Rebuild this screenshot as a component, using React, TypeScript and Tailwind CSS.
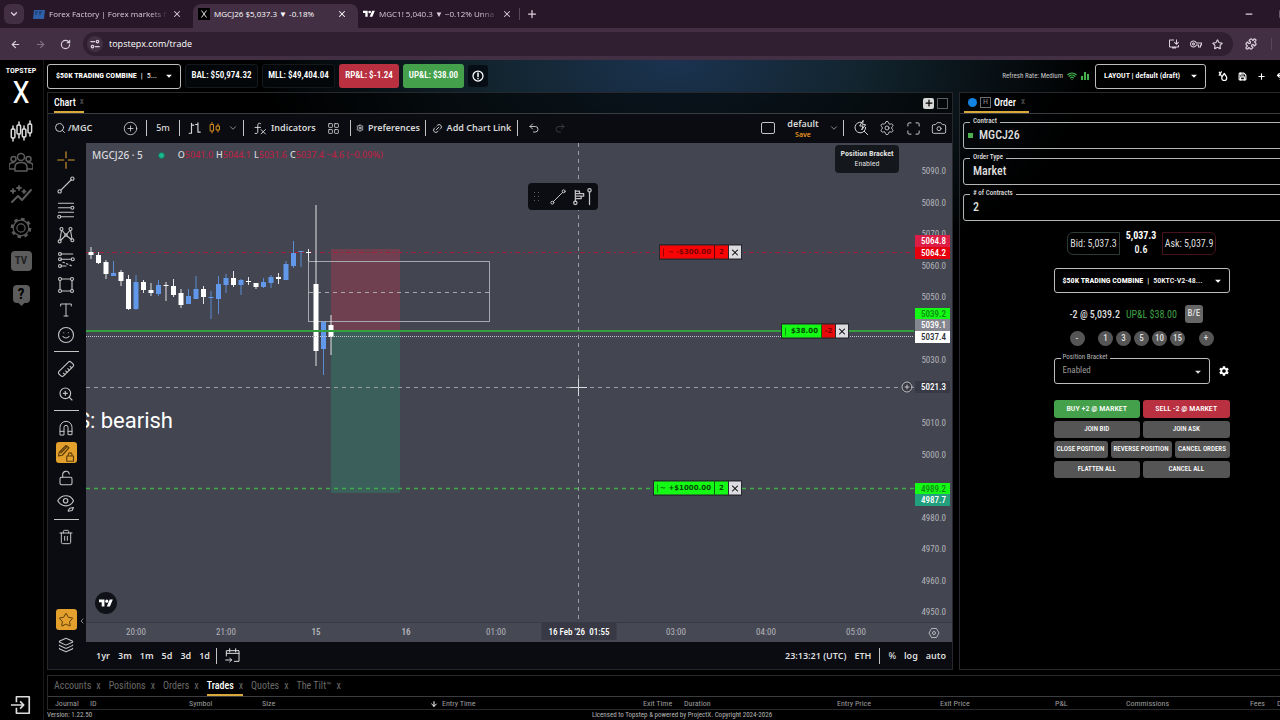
import React from 'react';
import {
  ArrowDown,
  ArrowLeft,
  ArrowRight,
  Camera,
  ChevronDown,
  ChevronLeft,
  CirclePlus,
  Layers,
  LayoutGrid,
  Link2,
  LockOpen,
  Maximize,
  Minus,
  Plus,
  Puzzle,
  Redo2,
  RotateCw,
  Ruler,
  Save,
  Search,
  Settings,
  Smile,
  Square,
  Star,
  Trash2,
  Undo2,
  Wifi,
  X,
  ZoomIn,
} from 'lucide-react';
import { MdSettings, MdOutlineVpnKey, MdOutlineInstallDesktop, MdArrowDropDown } from 'react-icons/md';

interface IconProps {
  className?: string;
  children: React.ReactNode;
}

const Glyph: React.FC<IconProps> = ({ className = 'size-[18px]', children }) => (
  <svg
    viewBox="0 0 24 24"
    fill="none"
    stroke="currentColor"
    strokeWidth="1.5"
    strokeLinecap="round"
    strokeLinejoin="round"
    aria-hidden="true"
    className={className}
  >
    {children}
  </svg>
);

const TradingViewMark: React.FC<{ className?: string }> = ({ className }) => (
  <svg viewBox="0 0 36 28" fill="currentColor" aria-hidden="true" className={className}>
    <path d="M14 22H7V11H0V4h14v18zM28 22h-8l7.5-18h8L28 22z" />
    <circle cx="20" cy="8" r="4" />
  </svg>
);

/* ---------- Browser chrome ---------- */

const browserTabs = [
  { title: 'Forex Factory | Forex markets f', icon: 'ff', active: false },
  { title: 'MGCJ26 $5,037.3 ▼ -0.18%', icon: 'x', active: true },
  { title: 'MGC1! 5,040.3 ▼ −0.12% Unna', icon: 'tv', active: false },
];

const BrowserChrome = () => (
  <header className="shrink-0 bg-[#281629] font-['Open_Sans',sans-serif] text-[#dccfdc]">
    <div className="flex h-7 items-center pl-1">
      <button aria-label="Search tabs" className="flex size-5 items-center justify-center rounded-md bg-[#432f44]">
        <ChevronDown className="size-2.5" strokeWidth={3} />
      </button>
      <div className="flex h-full items-end pl-1">
        {browserTabs.map((tab) => (
          <div
            key={tab.title}
            className={`flex h-6 w-[165px] items-center gap-1 rounded-t-lg pr-[11px] pb-1 pl-[5px] ${tab.active ? 'bg-[#432f44] text-white' : ''}`}
          >
            {tab.icon === 'ff' && (
              <svg viewBox="0 0 12 10" className="h-2.5 w-3 shrink-0" aria-hidden="true">
                <path d="M1 1h11l-1 9H0z" fill="#2f5fa8" />
                <path d="M2 3h3M2 5h2M6 3h3M6 5h2" stroke="#17335f" strokeWidth="1" />
              </svg>
            )}
            {tab.icon === 'x' && (
              <svg viewBox="0 0 12 12" className="size-3 shrink-0" aria-hidden="true">
                <path d="M0 0h12v12H0z" fill="#000" />
                <path d="M3.500 2.500l5 7M8.500 2.500l-5 7" stroke="#ddd" strokeWidth="1" />
              </svg>
            )}
            {tab.icon === 'tv' && <TradingViewMark className="h-2.5 w-3 shrink-0 text-white" />}
            <span className={`min-w-0 flex-1 text-[8px] font-medium whitespace-nowrap ${tab.active ? '' : '[mask-image:linear-gradient(90deg,#000_85%,transparent)]'}`}>
              {tab.title}
            </span>
            <button aria-label="Close tab">
              <X className="size-2.5" strokeWidth={2.5} />
            </button>
          </div>
        ))}
      </div>
      <div className="-ml-1 h-3 w-px bg-[#5a465b]" />
      <button aria-label="New tab" className="ml-1.5">
        <Plus className="size-3" strokeWidth={2.5} />
      </button>
      <div className="flex-1" />
      <button aria-label="Minimize" className="mr-[25px]">
        <Minus className="size-2.5" strokeWidth={3} />
      </button>
      <button aria-label="Restore" className="mr-9">
        <Square className="size-2.5" strokeWidth={3} />
      </button>
    </div>
    <div className="flex h-8 items-center bg-[#432f44] pl-2">
      <button aria-label="Back" className="flex w-[25px] justify-start pl-0.5">
        <ArrowLeft className="size-[11px]" strokeWidth={2.5} />
      </button>
      <button aria-label="Forward" className="flex w-[25px] justify-start pl-0.5 text-[#836f84]">
        <ArrowRight className="size-[11px]" strokeWidth={2.5} />
      </button>
      <button aria-label="Reload" className="flex w-[25px] justify-start pl-0.5">
        <RotateCw className="size-[11px]" strokeWidth={2.5} />
      </button>
      <div className="flex h-6 flex-1 items-center rounded-full bg-[#2f1f30] pl-1">
        <span className="flex size-4 items-center justify-center rounded-full bg-[#432f44]">
          <Glyph className="size-2.5">
            <path d="M2 6h9M13 18h9" strokeWidth="3" />
            <circle cx="18" cy="6" r="3" strokeWidth="3" />
            <circle cx="6" cy="18" r="3" strokeWidth="3" />
          </Glyph>
        </span>
        <input
          aria-label="Address"
          defaultValue="topstepx.com/trade"
          className="min-w-0 flex-1 bg-transparent pl-1.5 text-[9px] font-medium text-white outline-none"
        />
        <div className="flex items-center gap-2.5 pr-2.5">
          <MdOutlineInstallDesktop className="size-3" />
          <MdOutlineVpnKey className="size-3" />
          <Star className="size-[11px]" strokeWidth={2.5} />
        </div>
      </div>
      <button aria-label="Extensions" className="ml-3 w-[26px]">
        <Puzzle className="size-3" strokeWidth={2.5} />
      </button>
      <div className="mr-[53px] h-3 w-px bg-[#5a465b]" />
    </div>
  </header>
);

/* ---------- Sidebar ---------- */

const Sidebar = () => (
  <nav className="flex w-11 shrink-0 flex-col items-center border-r border-[#171717] bg-black pr-px pb-1 text-[#5c5c5c]">
    <div className="flex flex-col items-center pt-1.5 text-white">
      <span className="text-[8px] leading-[10px] font-semibold">TOPSTEP</span>
      <span className="text-[32px] leading-8">X</span>
    </div>
    <div className="flex flex-1 flex-col items-center pt-[7px]">
      <a href="#trade" aria-label="Trade" className="flex h-8 items-center text-[#dcdcdc]">
        <Glyph className="size-6">
          <path d="M4 7v3M4 19v3M10 3v3M10 15v4M15 7v3M15 18v3M21 2v3M21 14v3" />
          <rect x="2.3" y="10" width="3.6" height="9" rx="1" />
          <rect x="8" y="6" width="3.6" height="9" rx="1" />
          <rect x="13.3" y="10" width="3.6" height="8" rx="1" />
          <rect x="19" y="5" width="3.6" height="9" rx="1" />
        </Glyph>
      </a>
      <a href="#community" aria-label="Community" className="flex h-8 items-center">
        <Glyph className="size-6">
          <circle cx="12" cy="6" r="3.500" />
          <circle cx="4.500" cy="8" r="2.500" />
          <circle cx="19.500" cy="8" r="2.500" />
          <path d="M6 20v-4c0-3 2.500-4.500 6-4.500s6 1.500 6 4.500v4zM6 18H0v-3c0-2 2-3.500 5-3.500M18 18h6v-3c0-2-2-3.500-5-3.500" />
        </Glyph>
      </a>
      <a href="#stats" aria-label="Statistics" className="flex h-8 items-center">
        <Glyph className="size-6">
          <path d="M3 19l6-6 4 4 9-10" strokeWidth="2" />
          <path d="M4 6v4M2 8h4M10 3v4M8 5h4M15 7v3M13.500 8.500h3" strokeWidth="1.800" />
        </Glyph>
      </a>
      <a href="#settings" aria-label="Settings" className="flex h-[34px] items-center">
        <svg viewBox="0 0 24 24" fill="none" stroke="currentColor" className="size-[22px]" aria-hidden="true">
          <circle cx="12" cy="12" r="4.500" strokeWidth="1.300" />
          <circle cx="12" cy="12" r="8.500" strokeWidth="1.300" />
          <circle cx="12" cy="12" r="10" strokeWidth="2.500" strokeDasharray="3.900 3.900" />
        </svg>
      </a>
      <a href="#tv" aria-label="TradingView" className="flex h-8 items-center">
        <span className="flex h-5 w-[21px] items-center justify-center rounded bg-[#5c5c5c] text-[11px] font-bold text-[#222]">TV</span>
      </a>
      <a href="#help" aria-label="Help" className="flex h-[34px] items-center">
        <span className="relative flex h-[18px] w-[17px] items-center justify-center rounded-sm bg-[#5c5c5c] text-[15px] font-bold text-black after:absolute after:-bottom-0.5 after:left-1.5 after:size-[5px] after:rotate-45 after:bg-[#5c5c5c]">
          ?
        </span>
      </a>
    </div>
    <button aria-label="Log out" className="text-[#dcdcdc]">
      <Glyph className="size-[22px]">
        <path d="M7 9V3h14v18H7v-6M1 12h14M11 8l4 4-4 4" strokeWidth="1.800" strokeLinecap="butt" />
      </Glyph>
    </button>
  </nav>
);

/* ---------- Top bar ---------- */

const TopBar = () => (
  <div className="flex h-8 shrink-0 items-center gap-1 text-[9px] font-semibold text-white">
    <label className="relative flex h-[25px] w-[134px] items-center rounded-[3px] border border-[#bdbdbd] bg-black pl-2 text-[8px]">
      <span className="font-bold">$50K TRADING COMBINE</span>
      <span className="px-1 font-normal">|</span>
      <select aria-label="Trading account" className="min-w-0 flex-1 appearance-none bg-transparent font-normal outline-none">
        <option>5...</option>
      </select>
      <MdArrowDropDown className="pointer-events-none absolute right-1 size-3.5" />
    </label>
    <div className="flex h-6 w-[73px] items-center justify-center rounded-[3px] border border-[#15191c] bg-[#04070a]">BAL: $50,974.32</div>
    <div className="flex h-6 w-[73px] items-center justify-center rounded-[3px] border border-[#15191c] bg-[#04070a]">MLL: $49,404.04</div>
    <div className="flex h-6 w-[60px] items-center justify-center rounded-[3px] bg-[#b93040]">RP&amp;L: $-1.24</div>
    <div className="flex h-6 w-[61px] items-center justify-center rounded-[3px] bg-[#44a04b]">UP&amp;L: $38.00</div>
    <button aria-label="Account info" className="flex h-[22px] w-5 items-center justify-center rounded-[3px] bg-[#070d14]">
      <Glyph className="size-3">
        <circle cx="12" cy="12" r="10" strokeWidth="2.500" />
        <path d="M12 6v7M12 17v.5" strokeWidth="3" />
      </Glyph>
    </button>
    <div className="flex-1" />
    <span className="text-[7px] font-normal text-[#c8c8c8]">Refresh Rate: Medium</span>
    <Wifi className="size-2.5 text-[#44b04b]" strokeWidth={3} />
    <svg viewBox="0 0 8 8" fill="#44b04b" className="size-2" aria-hidden="true">
      <path d="M0 4h2v4H0zM3 0h2v8H3zM6 2h2v6H6z" />
    </svg>
    <label className="relative ml-0.5 flex h-[25px] w-[111px] items-center rounded-[3px] border border-[#bdbdbd] bg-black">
      <select aria-label="Layout" className="w-full appearance-none bg-transparent pl-2 text-[8px] outline-none">
        <option>LAYOUT | default (draft)</option>
      </select>
      <MdArrowDropDown className="pointer-events-none absolute right-1 size-3.5" />
    </label>
    <div className="mr-10 flex items-center gap-2.5 pl-2">
      <button aria-label="Theme">
        <Glyph className="size-2.5">
          <path d="M15 6c4 5 6 8 6 11a6 6 0 0 1-12 0c0-3 2-6 6-11zM3 3l5 9M8 2L3 10" strokeWidth="3" />
        </Glyph>
      </button>
      <button aria-label="Save layout"><Save className="size-[9px]" strokeWidth={3} /></button>
      <button aria-label="Add widget"><Plus className="size-[9px]" strokeWidth={3} /></button>
      <button aria-label="Reset layout"><Undo2 className="size-[9px]" strokeWidth={3} /></button>
    </div>
  </div>
);

/* ---------- Chart ---------- */

const Divider = () => <div className="h-4 w-px shrink-0 bg-[#c4c4c4]" />;

const ChartToolbar = () => (
  <div className="flex h-[29px] shrink-0 items-center bg-[#0a0c11] pb-px font-['Noto_Sans',sans-serif] text-[9px] font-semibold text-[#d6d6d6]">
    <button className="flex w-[66px] items-center gap-0.5 pl-1.5">
      <Search className="size-3" strokeWidth={1.8} />
      /MGC
    </button>
    <button aria-label="Compare symbol" className="flex w-8 justify-center">
      <CirclePlus className="size-[15px]" strokeWidth={1.3} />
    </button>
    <Divider />
    <button className="w-8 font-medium">5m</button>
    <Divider />
    <button aria-label="Bar replay" className="flex w-[29px] justify-center">
      <Glyph className="size-3.5">
        <path d="M6 4v17M2 21h4M6 7h4M17 3v16M13 6h4M17 19h4" strokeWidth="2" />
      </Glyph>
    </button>
    <button aria-label="Candle style" className="flex w-3 justify-center text-[#e8961e]">
      <Glyph className="size-3.5">
        <path d="M6 1v4M6 18v4M18 4v4M18 16v4" strokeWidth="1.800" />
        <rect x="3" y="5" width="6" height="13" strokeWidth="1.800" />
        <rect x="15" y="8" width="6" height="8" strokeWidth="1.800" />
      </Glyph>
    </button>
    <button aria-label="More chart styles" className="flex w-[22px] justify-center pl-0.5">
      <ChevronDown className="size-2.5" strokeWidth={1.5} />
    </button>
    <Divider />
    <button className="flex w-[79px] items-center gap-1 pl-2.5">
      <Glyph className="size-[13px]">
        <path d="M12 3c-3-2-5 0-5 3v12c0 3-2 4-5 3M2 10h10M13 14l8 8M21 14l-8 8" strokeWidth="1.800" />
      </Glyph>
      Indicators
    </button>
    <button aria-label="Indicator templates" className="flex w-[27px] pl-1">
      <LayoutGrid className="size-[13px]" strokeWidth={1.5} />
    </button>
    <Divider />
    <button className="flex w-[74px] items-center justify-center gap-1">
      <Settings className="size-2" strokeWidth={2.5} />
      Preferences
    </button>
    <Divider />
    <button className="flex w-[91px] items-center justify-center gap-1">
      <Link2 className="size-[11px] -rotate-45" />
      Add Chart Link
    </button>
    <Divider />
    <button aria-label="Undo" className="flex w-8 justify-center">
      <Undo2 className="size-3" strokeWidth={1.8} />
    </button>
    <button aria-label="Redo" className="flex w-5 justify-center text-[#3c3e44]">
      <Redo2 className="size-3" strokeWidth={1.8} />
    </button>
    <div className="flex-1" />
    <button aria-label="Select layout" className="flex w-[26px] justify-center">
      <span className="h-3 w-3.5 rounded-xs border border-[#c4c4c4]" />
    </button>
    <button className="flex w-11 flex-col items-center leading-3">
      default
      <span className="text-[7px] leading-[9px] text-[#e8961e]">Save</span>
    </button>
    <button aria-label="Manage layouts" className="flex w-[18px] justify-center">
      <ChevronDown className="size-2.5" strokeWidth={1.5} />
    </button>
    <Divider />
    <button aria-label="Quick search" className="ml-1 flex w-[26px] justify-center">
      <Glyph className="size-4">
        <path d="M13 3.500A8 8 0 1 0 19 11M17 17l5 5M15 1l-5 8h5l-2 6 6-8h-4z" />
      </Glyph>
    </button>
    <button aria-label="Chart settings" className="flex w-[26px] justify-center">
      <Settings className="size-4" strokeWidth={1.3} />
    </button>
    <button aria-label="Fullscreen" className="flex w-[26px] justify-center">
      <Maximize className="size-[15px]" strokeWidth={1.5} />
    </button>
    <button aria-label="Take a snapshot" className="flex w-[26px] justify-center">
      <Camera className="size-4" strokeWidth={1.3} />
    </button>
  </div>
);

const Tool: React.FC<{ label: string; active?: boolean; children: React.ReactNode }> = ({ label, active, children }) => (
  <button aria-label={label} className="flex h-[25px] items-center justify-center">
    <span className={`flex size-[21px] items-center justify-center rounded-[3px] ${active ? 'bg-[#e3a02c] text-[#5a3c08]' : ''}`}>
      {children}
    </span>
  </button>
);

const ToolDivider = () => (
  <div className="flex h-[9px] items-center justify-center">
    <div className="h-px w-[25px] bg-[#c4c4c4]" />
  </div>
);

const DrawingTools = () => (
  <div className="relative flex w-[38px] shrink-0 flex-col bg-[#0a0c11] pt-1 pr-0.5 pb-3 text-[#c4c4c4]">
    <Tool label="Crosshair">
      <span className="text-[#d99a2b]">
        <Glyph><path d="M12 1v8M12 15v8M1 12h8M15 12h8" /></Glyph>
      </span>
    </Tool>
    <Tool label="Trend line">
      <Glyph>
        <circle cx="3.500" cy="20.500" r="2.200" />
        <circle cx="20.500" cy="3.500" r="2.200" />
        <path d="M5 19L19 5" />
      </Glyph>
    </Tool>
    <Tool label="Fib retracement">
      <Glyph>
        <path d="M2 3h20M2 9h16M2 15h20M5 21h17" />
        <circle cx="20.500" cy="9" r="2" />
        <circle cx="3" cy="21" r="2" />
      </Glyph>
    </Tool>
    <Tool label="Patterns">
      <Glyph>
        <path d="M4 18L6 6M7 6l4 5M13 13l6 5M5 19l6-6M13 11l4-5M18 6l2 11" />
        <circle cx="6" cy="4" r="2" />
        <circle cx="18" cy="4" r="2" />
        <circle cx="3.500" cy="20.500" r="2" />
        <circle cx="20.500" cy="19" r="2" />
        <circle cx="12" cy="12" r="1.500" />
      </Glyph>
    </Tool>
    <Tool label="Forecasting">
      <Glyph>
        <path d="M5 4h16M5 11h14M5 20h7" />
        <path d="M8 15l12 5" strokeDasharray="2 3" />
        <circle cx="4" cy="4" r="2" />
        <circle cx="4" cy="11" r="2" />
        <circle cx="21" cy="11" r="2" />
        <circle cx="4" cy="20" r="2" />
      </Glyph>
    </Tool>
    <Tool label="Shapes">
      <Glyph>
        <path d="M6 4h12M6 20h12M4 6v12M20 6v12" />
        <circle cx="4" cy="4" r="2" />
        <circle cx="20" cy="4" r="2" />
        <circle cx="4" cy="20" r="2" />
        <circle cx="20" cy="20" r="2" />
      </Glyph>
    </Tool>
    <Tool label="Text">
      <Glyph className="size-4"><path d="M4 6V3h16v3M12 3v18M9 21h6" /></Glyph>
    </Tool>
    <Tool label="Icons">
      <Smile className="size-[18px]" strokeWidth={1.5} />
    </Tool>
    <ToolDivider />
    <Tool label="Measure">
      <Ruler className="size-[18px] rotate-90" strokeWidth={1.5} />
    </Tool>
    <Tool label="Zoom in">
      <ZoomIn className="size-4" strokeWidth={1.7} />
    </Tool>
    <ToolDivider />
    <Tool label="Magnet mode">
      <Glyph className="size-4">
        <path d="M3 22V11a9 9 0 0 1 18 0v11h-6V11a3 3 0 0 0-6 0v11zM3 17h6M15 17h6" />
      </Glyph>
    </Tool>
    <Tool label="Stay in drawing mode" active>
      <Glyph>
        <path d="M2 16l1-5L12 2l4 3-9 10zM5 12l8-8M13 16h9v7h-9zM15 16v-2c0-3 5-3 5 0v2" />
      </Glyph>
    </Tool>
    <Tool label="Lock all drawings">
      <LockOpen className="size-4" strokeWidth={1.6} />
    </Tool>
    <Tool label="Hide all drawings">
      <Glyph>
        <path d="M1 9c5-9 17-9 21 0-4 9-16 9-21 0zM15 22l2-3 5-1-2 4-5 1z" />
        <circle cx="11.500" cy="9" r="3" />
      </Glyph>
    </Tool>
    <ToolDivider />
    <Tool label="Remove drawings">
      <Trash2 className="size-4" strokeWidth={1.5} />
    </Tool>
    <div className="flex-1" />
    <Tool label="Favorites toolbar" active>
      <Star className="size-4" strokeWidth={1.5} />
    </Tool>
    <Tool label="Object tree">
      <Layers className="size-4" strokeWidth={1.6} />
    </Tool>
    <button aria-label="Hide drawing tools" className="absolute right-0 bottom-11">
      <ChevronLeft className="size-2" />
    </button>
  </div>
);

// [high, body top, body bottom, low, up]
const candles: [number, number, number, number, boolean][] = [
  [104, 109, 112, 116, false],
  [109, 112, 120, 121, false],
  [117, 119, 131, 136, false],
  [118, 130, 133, 133, true],
  [127, 129, 138, 143, false],
  [132, 136, 166, 167, false],
  [132, 139, 166, 167, true],
  [137, 139, 147, 150, false],
  [140, 147, 150, 153, false],
  [137, 142, 151, 153, true],
  [139, 142, 143, 158, false],
  [136, 143, 152, 154, false],
  [146, 150, 162, 165, false],
  [146, 153, 161, 161, true],
  [133, 146, 156, 156, true],
  [143, 146, 154, 161, false],
  [148, 154, 155, 176, true],
  [133, 141, 156, 171, true],
  [131, 135, 142, 150, true],
  [128, 135, 142, 144, false],
  [136, 137, 142, 152, true],
  [134, 138, 139, 142, false],
  [140, 140, 144, 146, false],
  [135, 139, 144, 145, true],
  [132, 134, 140, 145, true],
  [130, 134, 136, 141, false],
  [118, 121, 137, 137, true],
  [98, 110, 123, 125, true],
  [108, 108, 109, 124, true],
  [106, 109, 110, 118, false],
  [62, 141, 208, 223, false],
  [178, 179, 206, 232, true],
  [172, 182, 194, 212, false],
];

const priceTicks = [5090, 5080, 5070, 5060, 5050, 5030, 5010, 5000, 4980, 4970, 4960, 4950];
const priceToY = (price: number) => (5090 - price) * 3.15 + 28;

const priceTags = [
  { price: '5064.8', y: 98, style: 'bg-[#dc1e46] text-white' },
  { price: '5064.2', y: 110, style: 'bg-[#e6000e] text-white' },
  { price: '5039.2', y: 171, style: 'bg-[#14fa14] text-[#0f8a14]' },
  { price: '5039.1', y: 182, style: 'bg-[#858690] text-white' },
  { price: '5037.4', y: 194, style: 'bg-white text-[#30323a]' },
  { price: '5021.3', y: 244, style: 'bg-[#383944] text-white' },
  { price: '4989.2', y: 346, style: 'bg-[#14fa14] text-[#0f8a14]' },
  { price: '4987.7', y: 357, style: 'bg-[#22a07e] text-white' },
];

const timeTicks = [
  { x: 50, label: '20:00' },
  { x: 140, label: '21:00' },
  { x: 230, label: '15', strong: true },
  { x: 320, label: '16', strong: true },
  { x: 410, label: '01:00' },
  { x: 590, label: '03:00' },
  { x: 680, label: '04:00' },
  { x: 770, label: '05:00' },
];

interface OrderTagProps {
  x: number;
  y: number;
  width: number;
  text: string;
  qty: string;
  tone: string;
  qtyTone: string;
}

const OrderTag: React.FC<OrderTagProps> = ({ x, y, width, text, qty, tone, qtyTone }) => (
  <div
    className="absolute flex h-[15px] -translate-y-1/2 border border-[#26272e] bg-[#26272e] font-['DejaVu_Sans',sans-serif] text-[7px] font-bold"
    style={{ left: x, top: y }}
  >
    <span className={`flex items-center justify-between border-r border-black/60 px-[3px] ${tone}`} style={{ width }}>
      <span className="h-2 w-px bg-black/40" />
      {text}
    </span>
    <span className={`flex w-[13px] items-center justify-center ${qtyTone}`}>{qty}</span>
    <button aria-label="Cancel order" className="ml-px flex w-3 items-center justify-center bg-[#dcdce0] text-black">
      <X className="size-2.5" strokeWidth={2.5} />
    </button>
  </div>
);

const Plot = () => (
  <div className="relative flex min-h-0 flex-1 flex-col overflow-hidden bg-[#434550] text-[9px] text-[#b3b4bb]">
    <svg className="absolute top-0 left-0 h-full w-[calc(100%-38px)]" aria-hidden="true">
      <rect x="245" y="106" width="69" height="82" fill="#b03a50" fillOpacity="0.4" />
      <rect x="245" y="188" width="69" height="162" fill="#2f8868" fillOpacity="0.4" />
      <rect x="222.500" y="118.500" width="181" height="60" fill="none" stroke="#a6a7af" />
      <path d="M223 149.500H403" stroke="#a6a7af" strokeDasharray="4 4" />
      <line x1="0" x2="100%" y1="109.500" y2="109.500" stroke="#a3203a" strokeDasharray="5 3 2 3" />
      {candles.map(([high, top, bottom, low, up], i) => (
        <g key={i} fill={up ? '#6198ea' : '#ffffff'}>
          <rect x={4.5 + i * 7.5} y={high} width="1" height={low - high} fillOpacity="0.85" />
          <rect x={2.5 + i * 7.5} y={top} width="5" height={bottom - top} />
        </g>
      ))}
      <line x1="0" x2="100%" y1="188" y2="188" stroke="#35a03e" strokeWidth="2" />
      <line x1="0" x2="100%" y1="193.500" y2="193.500" stroke="#c4c5cb" strokeDasharray="1 1" />
      <line x1="0" x2="100%" y1="345.500" y2="345.500" stroke="#3fae47" strokeWidth="1.500" strokeDasharray="4 4" />
      <path d="M492.500 0V479" stroke="#9c9da6" strokeDasharray="4 4" />
      <line x1="0" x2="100%" y1="244.500" y2="244.500" stroke="#9c9da6" strokeDasharray="4 4" />
      <path d="M492.500 236v17M484 244.500h17" stroke="#d8d8dc" />
      <text x="87" y="285" textAnchor="end" fill="#ffffff" fontFamily="Roboto" fontSize="22">S: bearish</text>
    </svg>

    <div className="relative flex items-center gap-[3px] pt-1 pl-1.5 font-['Noto_Sans',sans-serif] text-[9px] leading-4 font-medium text-[#d8d8dc]">
      <span className="text-[10px]">MGCJ26 · 5</span>
      <span className="mr-2.5 ml-3 size-[7px] rounded-full border border-[#1f6b5c] bg-[#18b88c]" />
      <span>O<b className="font-medium text-[#b82346]">5041.0</b></span>
      <span>H<b className="font-medium text-[#b82346]">5044.1</b></span>
      <span>L<b className="font-medium text-[#b82346]">5031.6</b></span>
      <span>C<b className="font-medium text-[#b82346]">5037.4 −4.6 (−0.09%)</b></span>
    </div>

    <div className="absolute top-0.5 right-[53px] w-16 rounded-sm bg-[#14171c] py-1 text-center text-[8px] leading-[10px] text-[#dedede]">
      <b>Position Bracket</b>
      <br />
      Enabled
    </div>

    <div className="absolute top-10 left-[442px] flex h-[27px] w-[70px] items-center justify-between rounded bg-[#0c0d12] px-1.5 text-[#c4c4c4]">
      <svg viewBox="0 0 6 10" fill="#5a5c63" className="h-2.5 w-1.5" aria-hidden="true">
        <path d="M0 0h1v1H0zM4 0h1v1H4zM0 4h1v1H0zM4 4h1v1H4zM0 8h1v1H0zM4 8h1v1H4z" />
      </svg>
      <button aria-label="Trend line">
        <Glyph className="ml-1 size-4">
          <circle cx="3.500" cy="20.500" r="2.200" />
          <circle cx="20.500" cy="3.500" r="2.200" />
          <path d="M5 19L19 5" />
        </Glyph>
      </button>
      <button aria-label="Volume profile">
        <Glyph className="size-5">
          <path d="M4 4v13M4 5h5v3h5v3h-3v3H4M4 8h5M4 11h7M21 6v15" />
          <circle cx="4" cy="19" r="2" />
          <circle cx="21" cy="4" r="2" />
        </Glyph>
      </button>
    </div>

    <OrderTag x={573} y={109} width={55} text="~ -$300.00" qty="2" tone="bg-[#fa0505] text-[#7d0000]" qtyTone="bg-[#fa0505] text-[#7d0000]" />
    <OrderTag x={695} y={188} width={40} text="$38.00" qty="-2" tone="bg-[#14fa14] text-[#044a04]" qtyTone="bg-[#e60a0a] text-[#7d0000]" />
    <OrderTag x={567} y={345} width={61} text="~ +$1000.00" qty="2" tone="bg-[#14fa14] text-[#044a04]" qtyTone="bg-[#14fa14] text-[#044a04]" />

    {priceTicks.map((price) => (
      <span key={price} className="absolute right-1.5 -translate-y-1/2 leading-3" style={{ top: priceToY(price) }}>
        {price.toFixed(1)}
      </span>
    ))}
    {priceTags.map((tag) => (
      <span
        key={tag.price}
        className={`absolute right-0.5 w-[35px] -translate-y-1/2 pr-1 text-right leading-3 font-medium ${tag.style}`}
        style={{ top: tag.y }}
      >
        {tag.price}
      </span>
    ))}
    <button aria-label="Add alert" className="absolute top-[238px] right-[39px] rounded-full bg-[#383944] text-[#d8d8dc]">
      <CirclePlus className="size-3" strokeWidth={1.7} />
    </button>

    <span className="absolute bottom-7 left-[9px] flex size-[22px] items-center justify-center rounded-full bg-[#101218] text-white">
      <TradingViewMark className="h-[11px] w-3.5" />
    </span>

    <div className="absolute inset-x-0 bottom-0 h-5 border-t border-[#383a45] bg-[#464854] leading-[19px]">
      {timeTicks.map((tick) => (
        <span
          key={tick.label}
          className={`absolute -translate-x-1/2 ${tick.strong ? 'font-semibold' : ''}`}
          style={{ left: tick.x }}
        >
          {tick.label}
        </span>
      ))}
      <span className="absolute left-[493px] h-[17px] w-[75px] -translate-x-1/2 bg-[#383944] text-center font-medium whitespace-pre text-white">
        16 Feb '26  01:55
      </span>
      <svg viewBox="0 0 24 24" fill="none" stroke="currentColor" strokeWidth="2" className="absolute top-1 right-3 size-3" aria-hidden="true">
        <path d="M7 3h10l5 9-5 9H7l-5-9z" />
        <circle cx="12" cy="12" r="3" />
      </svg>
    </div>
  </div>
);

const ranges = ['1yr', '3m', '1m', '5d', '3d', '1d'];

const ChartFooter = () => (
  <div className="flex h-[27px] shrink-0 items-center bg-[#0a0c11] pr-1.5 pl-2.5 font-['Noto_Sans',sans-serif] text-[9px] font-semibold text-[#dedede]">
    <div className="flex gap-2 pr-1.5">
      {ranges.map((range) => (
        <button key={range}>{range}</button>
      ))}
    </div>
    <Divider />
    <button aria-label="Go to date" className="ml-2">
      <Glyph className="size-4">
        <path d="M2 12V4h19v16h-7M2 8h19M7 1v5M16 1v5M1 18h9M7 15l3 3-3 3" />
      </Glyph>
    </button>
    <div className="flex-1" />
    <div className="flex items-center gap-2">
      <button>23:13:21 (UTC)</button>
      <button>ETH</button>
      <Divider />
      <button className="font-medium">%</button>
      <button>log</button>
      <button>auto</button>
    </div>
  </div>
);

const ChartPanel = () => (
  <section className="flex min-w-0 flex-1 flex-col border border-[#26282b]">
    <div className="flex h-[21px] shrink-0 items-center border-b border-[#3a3c40] bg-black/60 pr-1 pl-1.5">
      <div className="flex h-full items-center gap-1 border-b-2 border-[#d9a93c] text-[10px] font-medium text-white">
        Chart
        <button aria-label="Close chart" className="text-[9px] text-[#4d4d4d]">x</button>
      </div>
      <div className="flex-1" />
      <button aria-label="Add tab" className="flex size-[11px] items-center justify-center rounded-xs bg-[#d8d8d8] text-black">
        <Plus className="size-2.5" strokeWidth={3} />
      </button>
      <button aria-label="Maximize panel" className="ml-[3px] size-[11px] border border-[#5e5e5e]" />
    </div>
    <ChartToolbar />
    <div className="flex min-h-0 flex-1">
      <DrawingTools />
      <div className="flex min-w-0 flex-1 flex-col">
        <Plot />
        <ChartFooter />
      </div>
    </div>
  </section>
);

/* ---------- Order ticket ---------- */

const Field: React.FC<{ id: string; label: string; children: React.ReactNode }> = ({ id, label, children }) => (
  <fieldset className="h-8 rounded-[3px] border border-[#b5b5b5]">
    <legend className="ml-1.5 h-2.5 px-[3px] text-[7px] leading-2 text-[#dedede]">
      <label htmlFor={id}>{label}</label>
    </legend>
    <div className="flex h-4 items-center">{children}</div>
  </fieldset>
);

const grayButton = 'h-[17px] rounded-[3px] bg-[#555555]';

const OrderPanel = () => (
  <section className="flex w-[366px] shrink-0 flex-col border border-[#26282b] bg-black/50">
    <div className="flex h-[21px] shrink-0 items-center border-b border-[#3a3c40] bg-black/60 pl-1">
      <div className="flex h-full items-center gap-[3px] border-b-2 border-[#d9a93c] px-1 text-[10px] font-medium text-white">
        <span className="size-[9px] rounded-full bg-[#1283e0]" />
        <span className="flex size-[11px] items-center justify-center border border-[#6e6e6e] text-[8px] font-normal text-[#8a8a8a]">H</span>
        <span>Order</span>
        <button aria-label="Close order" className="pl-0.5 text-[9px] text-[#4d4d4d]">x</button>
      </div>
    </div>
    <form className="flex flex-col pt-[3px] pr-1 pl-[3px] text-[12px] font-medium text-[#dedede]" onSubmit={(e) => e.preventDefault()}>
      <div className="flex flex-col gap-1">
        <Field id="contract" label="Contract">
          <span className="ml-1 size-[5px] bg-[#4caf50]" />
          <input id="contract" defaultValue="MGCJ26" className="min-w-0 flex-1 bg-transparent pl-1.5 outline-none" />
        </Field>
        <Field id="order-type" label="Order Type">
          <select id="order-type" className="w-full appearance-none bg-transparent pl-[9px] outline-none">
            <option>Market</option>
          </select>
        </Field>
        <Field id="contracts" label="# of Contracts">
          <input id="contracts" defaultValue="2" className="w-full bg-transparent pl-[9px] outline-none" />
        </Field>
      </div>

      <div className="mx-auto flex w-[176px] flex-col text-[10px]">
        <div className="mt-[9px] flex h-[26px] items-center justify-center gap-1.5 font-normal">
          <span className="flex h-[23px] w-[53px] items-center justify-center rounded-l-md border border-[#2c3b36]">Bid: 5,037.3</span>
          <span className="flex w-[30px] flex-col items-center leading-[14px] font-medium text-white">
            <b>5,037.3</b>
            0.6
          </span>
          <span className="flex h-[23px] w-[54px] items-center justify-center rounded-r-md border border-[#47131f]">Ask: 5,037.9</span>
        </div>
        <label className="relative mt-3 flex h-[25px] items-center rounded-[3px] border border-[#bdbdbd] pl-2 text-[8px] text-white">
          <span className="font-bold">$50K TRADING COMBINE</span>
          <span className="px-1 font-normal">|</span>
          <select aria-label="Order account" className="min-w-0 flex-1 appearance-none bg-transparent outline-none">
            <option>50KTC-V2-48...</option>
          </select>
          <MdArrowDropDown className="pointer-events-none absolute right-1 size-3.5" />
        </label>
        <div className="mt-[11px] flex h-5 items-center gap-1.5 pl-4">
          <span>-2 @ 5,039.2</span>
          <span className="font-normal text-[#3fa047]">UP&amp;L $38.00</span>
          <button className="ml-0.5 h-[18px] w-[18px] rounded-[3px] bg-[#666666] text-[9px]">B/E</button>
        </div>
        <div className="mt-[7px] flex items-center justify-between px-4 text-[9px]">
          <button className="size-[15px] rounded-full bg-[#555555]">-</button>
          <div className="flex gap-[3px]">
            {[1, 3, 5, 10, 15].map((qty) => (
              <button key={qty} className="size-[15px] rounded-full bg-[#555555]">{qty}</button>
            ))}
          </div>
          <button className="size-[15px] rounded-full bg-[#555555]">+</button>
        </div>
        <div className="mt-[7px] flex items-center">
          <fieldset className="relative h-[31px] w-[157px] rounded-[3px] border border-[#bdbdbd]">
            <legend className="ml-1.5 h-2.5 px-0.5 text-[7px] leading-2 font-normal text-[#b5b5b5]">
              <label htmlFor="bracket">Position Bracket</label>
            </legend>
            <select id="bracket" className="block h-4 w-full appearance-none bg-transparent pl-2 text-[9px] font-normal text-[#9a9a9a] outline-none">
              <option>Enabled</option>
            </select>
            <MdArrowDropDown className="pointer-events-none absolute top-0.5 right-1 size-3.5" />
          </fieldset>
          <button aria-label="Bracket settings" className="mt-1 ml-2">
            <MdSettings className="size-3 text-white" />
          </button>
        </div>
        <div className="mt-4 flex flex-col gap-[3px] text-[7px] text-white">
          <div className="grid grid-cols-2 gap-[3px] text-[8px]">
            <button className="h-[18px] rounded-[3px] bg-[#44a04b]">BUY +2 @ MARKET</button>
            <button className="h-[18px] rounded-[3px] bg-[#b93040]">SELL -2 @ MARKET</button>
          </div>
          <div className="grid grid-cols-2 gap-[3px]">
            <button className={grayButton}>JOIN BID</button>
            <button className={grayButton}>JOIN ASK</button>
          </div>
          <div className="grid grid-cols-[54px_61px_55px] gap-[3px] whitespace-nowrap">
            <button className={grayButton}>CLOSE POSITION</button>
            <button className={grayButton}>REVERSE POSITION</button>
            <button className={grayButton}>CANCEL ORDERS</button>
          </div>
          <div className="grid grid-cols-2 gap-[3px]">
            <button className={grayButton}>FLATTEN ALL</button>
            <button className={grayButton}>CANCEL ALL</button>
          </div>
        </div>
      </div>
    </form>
  </section>
);

/* ---------- Bottom panel ---------- */

const bottomTabs = ['Accounts', 'Positions', 'Orders', 'Trades', 'Quotes', 'The Tilt™'];

const BottomPanel = () => (
  <section className="shrink-0 border border-b-0 border-[#26282b] bg-black">
    <div className="flex h-[21px] items-center gap-2 border-b border-[#3a3c40] pl-1.5 text-[10px] text-[#6a6a6a]">
      {bottomTabs.map((tab) => (
        <div
          key={tab}
          className={`flex h-full items-center gap-[5px] border-b-2 ${tab === 'Trades' ? 'border-[#d9a93c] font-medium text-white' : 'border-transparent'}`}
        >
          <button>{tab}</button>
          <button aria-label={`Close ${tab}`} className="font-normal text-[#6a6a6a]">x</button>
        </div>
      ))}
    </div>
    <table className="w-full table-fixed border-b border-[#26282b] text-left text-[8px] leading-[10px] text-[#9c9c9c]">
      <thead>
        <tr className="whitespace-nowrap [&>th]:pt-0.5 [&>th]:font-normal">
          <th className="w-[42px] pl-[7px]">Journal</th>
          <th className="w-[99px]">ID</th>
          <th className="w-[73px]">Symbol</th>
          <th className="w-[168px]">Size</th>
          <th className="w-[213px]">
            <span className="flex items-center gap-1">
              <ArrowDown className="size-2 text-white" strokeWidth={3} />
              Entry Time
            </span>
          </th>
          <th className="w-[41px]">Exit Time</th>
          <th className="w-[153px]">Duration</th>
          <th className="w-[103px]">Entry Price</th>
          <th className="w-[115px]">Exit Price</th>
          <th className="w-[71px]">P&amp;L</th>
          <th className="w-[124px]">Commissions</th>
          <th className="w-[27px]">Fees</th>
          <th>Direction</th>
        </tr>
      </thead>
    </table>
  </section>
);

const App = () => (
  <div className="h-screen overflow-hidden bg-black">
    <div className="flex h-full w-[calc(100%+45px)] flex-col">
      <BrowserChrome />
      <div className="flex min-h-0 flex-1 font-['Roboto_Condensed','Roboto',sans-serif]">
        <Sidebar />
        <main className="flex min-w-0 flex-1 flex-col bg-[radial-gradient(ellipse_420px_240px_at_630px_0,#1b3350,#12242e_45%,#000)] pl-[3px]">
          <TopBar />
          <div className="flex min-h-0 flex-1 gap-1.5">
            <ChartPanel />
            <OrderPanel />
          </div>
          <div className="h-[5px] shrink-0" />
          <BottomPanel />
          <footer className="grid h-2.5 shrink-0 grid-cols-[1fr_auto_1fr] text-[7px] leading-[10px] text-[#b5b5b5]">
            <span>Version: 1.22.50</span>
            <span className="pr-2">Licensed to Topstep &amp; powered by ProjectX. Copyright 2024-2026</span>
          </footer>
        </main>
      </div>
    </div>
  </div>
);

export default App;
